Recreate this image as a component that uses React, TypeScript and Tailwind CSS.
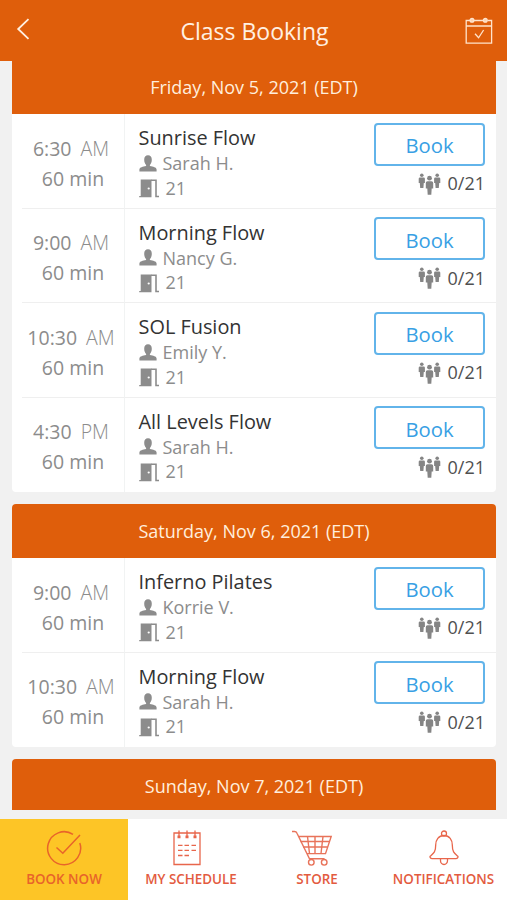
import React from 'react'

interface ClassItem {
  time: string
  period: string
  name: string
  teacher: string
}

interface Day {
  date: string
  classes: ClassItem[]
}

const friday: Day = {
  date: 'Friday, Nov 5, 2021 (EDT)',
  classes: [
    { time: '6:30', period: 'AM', name: 'Sunrise Flow', teacher: 'Sarah H.' },
    { time: '9:00', period: 'AM', name: 'Morning Flow', teacher: 'Nancy G.' },
    { time: '10:30', period: 'AM', name: 'SOL Fusion', teacher: 'Emily Y.' },
    { time: '4:30', period: 'PM', name: 'All Levels Flow', teacher: 'Sarah H.' },
  ],
}

const saturday: Day = {
  date: 'Saturday, Nov 6, 2021 (EDT)',
  classes: [
    { time: '9:00', period: 'AM', name: 'Inferno Pilates', teacher: 'Korrie V.' },
    { time: '10:30', period: 'AM', name: 'Morning Flow', teacher: 'Sarah H.' },
  ],
}

function BackIcon() {
  return (
    <svg width="14" height="22" viewBox="0 0 14 22" fill="none" stroke="#fff0e2" strokeWidth="1.8">
      <path d="M12.5 1.2 2.2 11l10.3 9.8" />
    </svg>
  )
}

function CalendarCheckIcon() {
  return (
    <svg width="28" height="28" viewBox="0 0 28 28" fill="none" stroke="#ffe3cc" strokeWidth="1.3">
      <path d="M5 3.5H1.2v22.6h25.4V3.5h-4M9 3.5h9.5M1.2 9h25.4" />
      <circle cx="7" cy="3.3" r="1.9" fill="#ffd3b0" />
      <circle cx="20.3" cy="3.3" r="1.9" fill="#ffd3b0" />
      <path d="m10 16.8 3.6 4 5-7.8" />
    </svg>
  )
}

function PersonIcon() {
  return (
    <svg width="18" height="17" viewBox="0 0 18 17" fill="#8c8c8c">
      <path d="M9 .3c2.5 0 3.8 1.7 3.8 4.5 0 2.3-.8 4.2-1.9 5.3v1c3.3.7 6.5 1.400 6.700 3.300v2H.4v-2c.2-1.900 3.400-2.600 6.700-3.300v-1C6 9 5.200 7.100 5.200 4.800 5.200 2 6.500.3 9 .3Z" />
    </svg>
  )
}

function DoorIcon() {
  return (
    <svg className="mt-[2px]" width="20" height="19" viewBox="0 0 20 19">
      <path fill="#8c8c8c" d="M1.7.5h10.8v17.8H.2v-1.4h1.5Z" />
      <path fill="none" stroke="#8c8c8c" strokeWidth="1.6" d="M12 1.3h5v16.2h3" />
      <circle cx="9.7" cy="9.5" r="1.1" fill="#fff" />
    </svg>
  )
}

function GroupIcon() {
  return (
    <svg width="23" height="22" viewBox="0 0 23 22" fill="#858585">
      <circle cx="3.8" cy="2.2" r="1.8" />
      <path d="M2 4.5h3.6q1.3 0 1.3 1.3v4.2H5.8l-.4 5H2.2l-.4-5H.7V5.8q0-1.3 1.3-1.3Z" />
      <circle cx="19.2" cy="2.2" r="1.8" />
      <path d="M17.4 4.5H21q1.3 0 1.3 1.3v4.2h-1.100l-.4 5h-3.200l-.4-5h-1.100V5.800q0-1.300 1.300-1.300Z" />
      <circle cx="11.5" cy="5.2" r="2.4" />
      <path d="M9.5 8.3h4q1.7 0 1.7 1.7v5.5h-1.5l-.4 6.300H9.700l-.4-6.300H7.800V10q0-1.700 1.700-1.700Z" />
    </svg>
  )
}

function BookNowIcon() {
  return (
    <svg width="36" height="36" viewBox="0 0 36 36" fill="none" stroke="#e8642a" strokeWidth="1.5">
      <path d="M27 4.3A16.500 16.500 0 1 0 33.800 13" />
      <path d="m10.5 17.5 6.3 5.7L34 5" />
    </svg>
  )
}

function ScheduleIcon() {
  return (
    <svg className="-ml-[8px]" width="28" height="36" viewBox="0 0 28 36" fill="none" stroke="#e8664b" strokeWidth="1.3">
      <path d="M1 3h26v31.5H1Z" />
      <path d="M6 .5v6M14 .5v6M22 .5v6" />
      <path d="M6 5.5v2.800M14 5.500v2.800M22 5.500v2.800" strokeWidth="3" />
      <path d="M5 15.300h4.500m2 0H16m2.500 0H23M5 20.300h4.500m2 0H16m2.500 0H23M5 25.500h4.500m2 0H16" />
    </svg>
  )
}

function CartIcon() {
  return (
    <svg className="-ml-[10px]" width="42" height="36" viewBox="0 0 42 36" fill="none" stroke="#e8735a" strokeWidth="1.4">
      <path d="M1 1.500h2.500q1.800 0 2.500 1.800l12.500 25.500h15M7.500 6.500h32.700L34.500 23.600H16" />
      <path d="M9.500 11.500h28.800M12 17h24.500M16.500 6.500l2 17M24 6.500v17M32 6.500l-2 17" />
      <circle cx="20.3" cy="32.3" r="2.8" />
      <circle cx="33.2" cy="32.3" r="2.8" />
    </svg>
  )
}

function BellIcon() {
  return (
    <svg width="30" height="36" viewBox="0 0 30 36" fill="none" stroke="#e8664b" strokeWidth="1.3">
      <circle cx="15" cy="3.5" r="2.5" />
      <path d="M15 5.500c-5.500 0-8.300 4.300-8.300 9.500 0 7-2 8.300-5.300 11-1 1 0 2.600 1.800 2.600h23.600c1.800 0 2.800-1.600 1.800-2.600-3.300-2.700-5.300-4-5.300-11 0-5.200-2.800-9.500-8.300-9.500Z" />
      <path d="M11.500 28.800v2a3.500 3.700 0 0 0 7 0v-2" />
    </svg>
  )
}

function ClassRow({ item, last }: { item: ClassItem; last: boolean }) {
  return (
    <div className="flex h-[94.5px] text-[#8c8c8c]">
      <div className={`ml-[10px] flex w-[103px] flex-col items-center border-r border-r-[#f1f3f3] pt-[19.5px] text-[19.5px] leading-[30px] ${last ? '' : 'border-b border-b-[#efefef]'}`}>
        <div className="flex gap-[9px] pr-[4px] whitespace-nowrap">
          <span>{item.time}</span>
          <span className="font-light">{item.period}</span>
        </div>
        <div>60 min</div>
      </div>
      <div className={`flex flex-1 justify-between pr-[11px] pl-[13.5px] ${last ? '' : 'border-b border-b-[#efefef]'}`}>
        <div className="pt-[11px]">
          <div className="text-[19.9px] leading-[26px] whitespace-nowrap text-[#333]">{item.name}</div>
          <div className="flex h-[24.5px] items-center gap-[6px] text-[18px] leading-[24px]">
            <PersonIcon />
            <span>{item.teacher}</span>
          </div>
          <div className="flex h-[24px] items-center gap-[7px] text-[18px] leading-[24px]">
            <DoorIcon />
            <span>21</span>
          </div>
        </div>
        <div className="flex flex-col items-end pt-[8.5px]">
          <button className="h-[43px] w-[111px] rounded-[4px] border-2 border-[#62b4ea] pt-[3px] text-[20.3px] leading-none text-[#38a0e4]">
            Book
          </button>
          <div className="mt-[6px] flex h-[24px] items-center gap-[7px] text-[18px] text-[#505050]">
            <GroupIcon />
            <span>0/21</span>
          </div>
        </div>
      </div>
    </div>
  )
}

function DayCard({ day, className }: { day: Day; className: string }) {
  return (
    <section className={`overflow-hidden bg-white ${className}`}>
      <h2 className="flex h-[54px] items-center justify-center bg-[#df5e0b] text-[18px] text-[#ffeedd]">
        {day.date}
      </h2>
      {day.classes.map((item, index) => (
        <ClassRow key={index} item={item} last={index === day.classes.length - 1} />
      ))}
    </section>
  )
}

const tabs = [
  { label: 'BOOK NOW', icon: <BookNowIcon />, style: 'w-[128px] bg-[#fdc526] text-[#e8642a]' },
  { label: 'MY SCHEDULE', icon: <ScheduleIcon />, style: 'w-[126px] bg-white text-[#e35b40]' },
  { label: 'STORE', icon: <CartIcon />, style: 'w-[126px] bg-white text-[#e35b40]' },
  { label: 'NOTIFICATIONS', icon: <BellIcon />, style: 'w-[127px] bg-white text-[#e35b40]' },
]

export default function App() {
  return (
    <div className="flex h-[900px] w-[507px] flex-col overflow-hidden bg-[#f1f1f1] font-['Open_Sans',sans-serif]">
      <header className="flex h-[61px] shrink-0 items-center justify-between bg-[#df5e0b] pr-[14px] pl-4">
        <div className="flex w-8 pb-1">
          <BackIcon />
        </div>
        <h1 className="pt-[2px] text-[23px] text-[#fff0e2]">Class Booking</h1>
        <div className="flex w-8 justify-end">
          <CalendarCheckIcon />
        </div>
      </header>

      {/* Class list */}
      <main className="flex h-[749px] shrink-0 flex-col gap-3 overflow-hidden pr-[11px] pl-3">
        <DayCard day={friday} className="-mt-px shrink-0 rounded-b-[4px]" />
        <DayCard day={saturday} className="shrink-0 rounded-[4px]" />
        <DayCard day={{ date: 'Sunday, Nov 7, 2021 (EDT)', classes: [] }} className="shrink-0 rounded-t-[4px]" />
      </main>

      {/* Bottom tabs */}
      <nav className="mt-[9px] flex h-[81px] shrink-0">
        {tabs.map((tab) => (
          <div key={tab.label} className={`flex flex-col items-center pt-[11px] ${tab.style}`}>
            {tab.icon}
            <span className="mt-[5px] text-[13.4px] leading-[17px] font-semibold whitespace-nowrap">{tab.label}</span>
          </div>
        ))}
      </nav>
    </div>
  )
}
